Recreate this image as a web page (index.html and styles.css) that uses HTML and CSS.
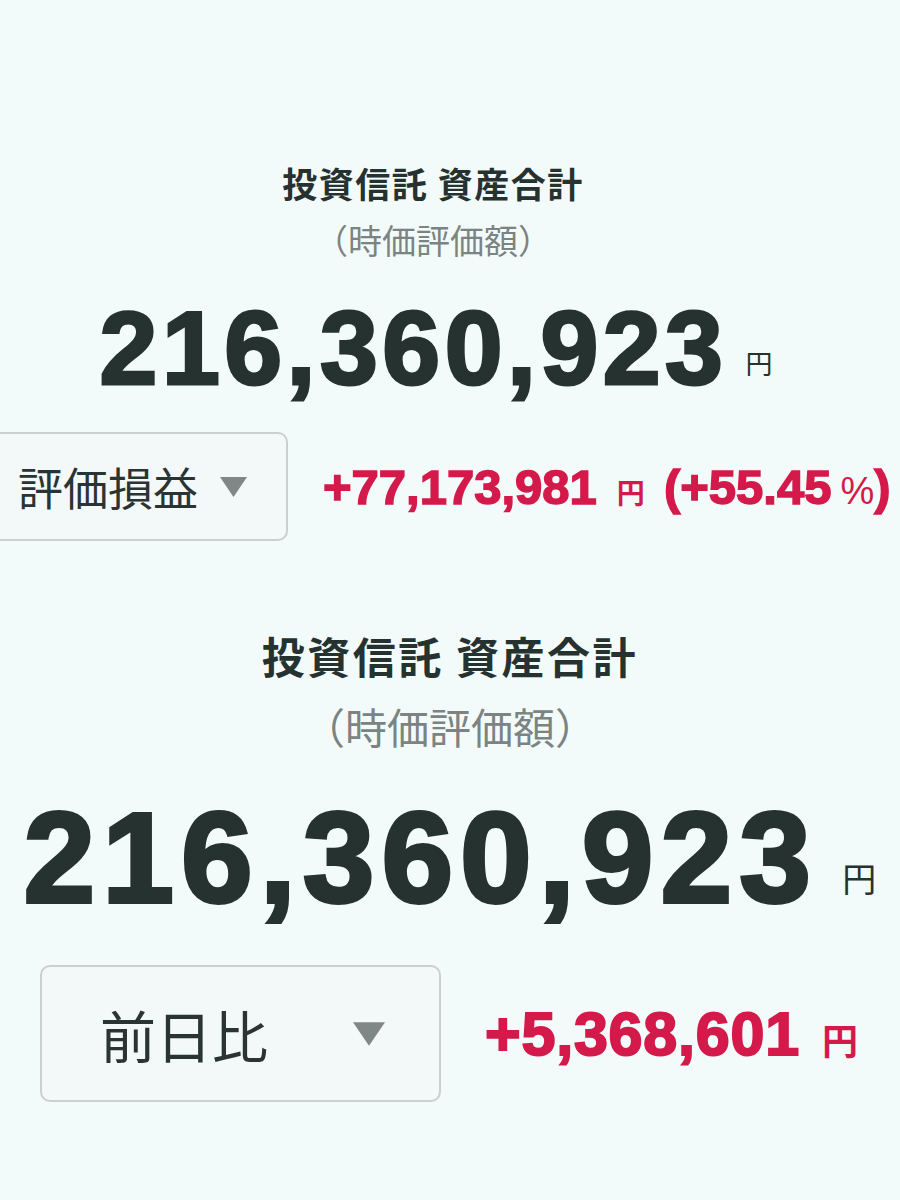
FILE: index.html
```html
<!DOCTYPE html>
<html lang="ja">
<head>
<meta charset="utf-8">
<title>投資信託 資産合計</title>
<link rel="stylesheet" href="styles.css">
</head>
<body>
<main class="page">
  <section class="summary summary-a">
    <h2 class="title">投資信託 資産合計</h2>
    <p class="sub">（時価評価額）</p>
    <div class="total">
      <span class="num">216,360,923</span><span class="yen">円</span>
    </div>
    <div class="change-row">
      <div class="select">
        <span class="label">評価損益</span>
        <svg class="caret" viewBox="0 0 27 20" aria-hidden="true"><polygon points="0,0 27,0 13.5,20"/></svg>
      </div>
      <div class="change">
        <span class="amount">+77,173,981</span><span class="yen-s">円</span><span class="pct">(+55.45<span class="pct-sign">%</span>)</span>
      </div>
    </div>
  </section>

  <section class="summary summary-b">
    <h2 class="title">投資信託 資産合計</h2>
    <p class="sub">（時価評価額）</p>
    <div class="total">
      <span class="num">216,360,923</span><span class="yen">円</span>
    </div>
    <div class="change-row">
      <div class="select">
        <span class="label">前日比</span>
        <svg class="caret" viewBox="0 0 27 20" aria-hidden="true"><polygon points="0,0 27,0 13.5,20"/></svg>
      </div>
      <div class="change">
        <span class="amount">+5,368,601</span><span class="yen-s">円</span>
      </div>
    </div>
  </section>
</main>
</body>
</html>
```

FILE: styles.css
```css
* { box-sizing: border-box; }

html, body {
  margin: 0;
  padding: 0;
  background: #f3fbfa;
}

body {
  width: 900px;
  height: 1200px;
  overflow: hidden;
  color: #263230;
  font-family: "Noto Sans CJK JP", "Noto Sans", sans-serif;
}

.page {
  display: flex;
  flex-direction: column;
  padding-top: 163px;
}

.summary {
  display: flex;
  flex-direction: column;
}

.title {
  margin: 0;
  text-align: center;
  font-weight: 700;
  color: #263230;
}

.sub {
  margin: 0;
  text-align: center;
  font-weight: 400;
  color: #7b8482;
}

.total {
  display: flex;
  justify-content: center;
  align-items: baseline;
}

.num {
  font-family: "Liberation Sans", Arial, sans-serif;
  font-weight: 700;
  color: #263230;
  -webkit-text-stroke-color: #263230;
}

.yen {
  font-weight: 400;
  color: #263230;
}

.change-row {
  display: flex;
  align-items: center;
}

.select {
  display: flex;
  align-items: center;
  background: #f2f9f8;
  border: 2px solid #c9d0ce;
}

.label {
  font-weight: 400;
  color: #2a3432;
  line-height: 1;
}

.caret {
  fill: #7f8886;
  display: block;
}

.change {
  display: flex;
  align-items: baseline;
  color: #d41a4b;
  font-family: "Liberation Sans", Arial, sans-serif;
  font-weight: 700;
}

.amount {
  -webkit-text-stroke-color: #d41a4b;
}

.yen-s {
  font-family: "Noto Sans CJK JP", sans-serif;
  font-weight: 700;
}

.pct {
  -webkit-text-stroke-color: #d41a4b;
}

.pct-sign {
  font-weight: 400;
  -webkit-text-stroke-width: 0;
}

/* ---- section A ---- */
.summary-a .title {
  padding-right: 34px;
  font-size: 35px;
  line-height: 40px;
  letter-spacing: 1.5px;
}
.summary-a .sub {
  padding-right: 34px;
  margin-top: 17px;
  font-size: 34px;
  line-height: 40px;
}
.summary-a .total {
  margin-top: 36px;
  padding-right: 28px;
}
.summary-a .num {
  font-size: 104px;
  line-height: 104px;
  letter-spacing: 4.5px;
  -webkit-text-stroke-width: 3px;
}
.summary-a .yen {
  font-size: 27px;
  margin-left: 18px;
  position: relative;
  top: -10px;
}
.summary-a .change-row {
  margin-top: 32px;
  gap: 35px;
}
.summary-a .select {
  width: 298px;
  height: 109px;
  margin-left: -10px;
  padding-left: 26px;
  border-radius: 10px;
  gap: 22px;
}
.summary-a .label {
  font-size: 45px;
}
.summary-a .caret {
  width: 27px;
  height: 20px;
}
.summary-a .amount {
  font-size: 49px;
  line-height: 56px;
  -webkit-text-stroke-width: 1.5px;
}
.summary-a .yen-s {
  font-size: 28px;
  margin-left: 20px;
}
.summary-a .pct {
  font-size: 49px;
  margin-left: 19px;
  -webkit-text-stroke-width: 1.5px;
}
.summary-a .pct-sign {
  font-size: 38px;
  margin-left: 9px;
}

/* ---- section B ---- */
.summary-b {
  margin-top: 90px;
}
.summary-b .title {
  font-size: 43px;
  line-height: 48px;
  letter-spacing: 2.5px;
}
.summary-b .sub {
  margin-top: 22px;
  font-size: 42px;
  line-height: 50px;
}
.summary-b .total {
  margin-top: 43px;
}
.summary-b .num {
  font-size: 128px;
  line-height: 128px;
  letter-spacing: 7.5px;
  -webkit-text-stroke-width: 4px;
}
.summary-b .yen {
  font-size: 34px;
  margin-left: 24px;
  position: relative;
  top: -10px;
}
.summary-b .change-row {
  margin-top: 43px;
  padding-left: 40px;
  gap: 44px;
}
.summary-b .select {
  width: 401px;
  height: 137px;
  padding-left: 58px;
  border-radius: 10px;
  gap: 85px;
}
.summary-b .label {
  font-size: 56px;
}
.summary-b .caret {
  width: 32px;
  height: 26px;
}
.summary-b .amount {
  font-size: 61px;
  line-height: 66px;
  letter-spacing: 0.8px;
  -webkit-text-stroke-width: 2px;
}
.summary-b .yen-s {
  font-size: 36px;
  margin-left: 22px;
}
```
